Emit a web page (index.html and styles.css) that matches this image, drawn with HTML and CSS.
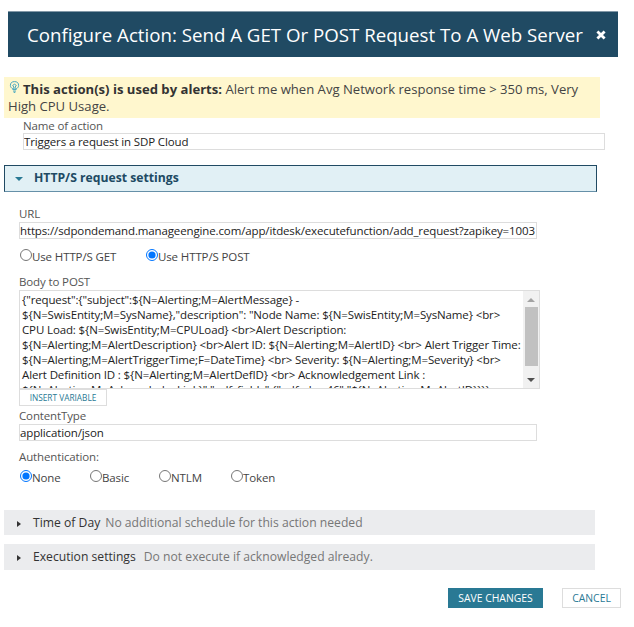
FILE: index.html
```
<!DOCTYPE html>
<html lang="en">

<head>
  <meta charset="UTF-8">
  <meta name="viewport" content="width=device-width, initial-scale=1.0">
  <title>Configure Action</title>
  <link rel="stylesheet" href="styles.css">
</head>

<body>
  <header class="dialog-title">
    <h1>Configure Action: Send A GET Or POST Request To A Web Server</h1>
    <svg class="close" viewBox="0 0 10 10"><path d="M1.4 1.4 8.6 8.6M8.6 1.4 1.4 8.6" /></svg>
  </header>

  <div class="hint">
    <svg class="bulb" viewBox="0 0 10 12">
      <path d="M3.3 8.6V7.8C1.8 7 .9 6 .9 4.5a4.1 3.9 0 0 1 8.2 0C9.1 6 8.2 7 6.7 7.8v.8z" />
      <path d="M4.3 8.4V6L3.2 4.4 5 3.2l1.8 1.2L5.7 6v2.4M3.6 10.1h2.8M4.2 11.4h1.6" />
    </svg>
    <p><strong>This action(s) is used by alerts:</strong> <span>Alert me when Avg Network response time &gt; 350 ms, Very</span><br><span class="hint-end">High CPU Usage.</span></p>
  </div>

  <div class="name">
    <label class="label" for="name">Name of action</label>
    <input class="field" id="name" type="text" value="Triggers a request in SDP Cloud">
  </div>

  <h2 class="section-title"><i class="arrow-down"></i><span>HTTP/S request settings</span></h2>

  <div class="settings">
    <label class="label" for="url">URL</label>
    <input class="field url" id="url" type="text" value="https://sdpondemand.manageengine.com/app/itdesk/executefunction/add_request?zapikey=1003">

    <div class="radios method">
      <label><input type="radio" name="method"><span>Use HTTP/S GET</span></label>
      <label><input type="radio" name="method" checked><span>Use HTTP/S POST</span></label>
    </div>

    <div class="label">Body to POST</div>
    <div class="body-post">
      <div class="lines">
        <p>{"request":{"subject":${N=Alerting;M=AlertMessage} -</p>
        <p>${N=SwisEntity;M=SysName},"description": "Node Name: ${N=SwisEntity;M=SysName} &lt;br&gt;</p>
        <p>CPU Load: ${N=SwisEntity;M=CPULoad} &lt;br&gt;Alert Description:</p>
        <p>${N=Alerting;M=AlertDescription} &lt;br&gt;Alert ID: ${N=Alerting;M=AlertID} &lt;br&gt; Alert Trigger Time:</p>
        <p>${N=Alerting;M=AlertTriggerTime;F=DateTime} &lt;br&gt; Severity: ${N=Alerting;M=Severity} &lt;br&gt;</p>
        <p>Alert Definition ID : ${N=Alerting;M=AlertDefID} &lt;br&gt; Acknowledgement Link :</p>
        <p>${N=Alerting;M=AcknowledgeLink}","udf_fields":{"udf_char46":"${N=Alerting;M=AlertID}}}}</p>
      </div>
      <div class="scrollbar">
        <i class="up"></i>
        <div class="thumb"></div>
        <i class="down"></i>
      </div>
    </div>
    <button class="insert">INSERT VARIABLE</button>

    <label class="label content-label" for="type">ContentType</label>
    <input class="field type" id="type" type="text" value="application/json">

    <div class="label auth-label">Authentication:</div>
    <div class="radios auth">
      <label><input type="radio" name="auth" checked><span>None</span></label>
      <label><input type="radio" name="auth"><span>Basic</span></label>
      <label><input type="radio" name="auth"><span>NTLM</span></label>
      <label><input type="radio" name="auth"><span>Token</span></label>
    </div>
  </div>

  <div class="bar time"><i class="arrow-right"></i><b>Time of Day</b><span>No additional schedule for this action needed</span></div>
  <div class="bar execution"><i class="arrow-right"></i><b>Execution settings</b><span>Do not execute if acknowledged already.</span></div>

  <footer class="buttons">
    <button class="save">SAVE CHANGES</button>
    <button class="cancel">CANCEL</button>
  </footer>
</body>

</html>
```
FILE: styles.css
```
* {
  box-sizing: border-box;
  margin: 0;
  padding: 0;
}

body {
  width: 634px;
  height: 627px;
  padding: 11px 0 0 4px;
  overflow: hidden;
  background: #fff;
  font-family: "Open Sans", "Liberation Sans", sans-serif;
  font-size: 11.5px;
  color: #444;
}

button,
input {
  font-family: inherit;
}

.dialog-title {
  display: flex;
  align-items: center;
  width: 610px;
  height: 46px;
  margin-left: 4px;
  padding-left: 19px;
  background: #204a63;
  border-top: 1px solid #8298a7;
  color: #fff;
}

h1 {
  width: 569px;
  font-size: 18.7px;
  font-weight: 400;
  white-space: nowrap;
}

.close {
  width: 10px;
  height: 10px;
  fill: none;
  stroke: #fff;
  stroke-width: 2.8;
}

.hint {
  display: flex;
  width: 596px;
  height: 41px;
  margin-top: 20px;
  padding-left: 4px;
  background: #fff7ce;
  font-size: 13.1px;
  line-height: 17px;
  white-space: nowrap;
}

.hint p {
  padding-top: 4px;
  color: #444;
}

.hint strong {
  color: #333;
}

.hint-end {
  margin-left: -15px;
}

.bulb {
  width: 11px;
  height: 12px;
  margin: 4px 3px 0 1px;
  fill: none;
  stroke: #45a6bf;
}

.label {
  display: block;
  height: 15px;
  line-height: 15px;
  font-size: 11.5px;
  letter-spacing: -0.13px;
  color: #555;
}

.field {
  display: block;
  height: 17px;
  border: 1px solid #ddd;
  font-size: 11.5px;
  letter-spacing: -0.13px;
  color: #222;
  outline: 0;
}

.name {
  margin-left: 19px;
}

.name .field {
  width: 582px;
}

.section-title {
  display: flex;
  align-items: center;
  width: 593px;
  height: 27px;
  margin-top: 15px;
  background: #e1f0f5;
  border: 1px solid #204a63;
  border-bottom-color: #6690a8;
  font-size: 12.2px;
  color: #204a63;
}

.section-title span {
  margin-top: -2px;
}

.arrow-down {
  margin: 0 11px 0 10px;
  border: 4px solid transparent;
  border-top: 4px solid #297994;
  border-bottom: 0;
}

.settings {
  height: 318px;
  padding: 15px 0 0 15px;
}

.settings .label {
  line-height: 13px;
}

.url,
.type {
  width: 518px;
}

.radios {
  display: flex;
  font-size: 11.5px;
  letter-spacing: -0.12px;
  color: #444;
}

.radios label {
  display: flex;
}

.radios input {
  width: 12px;
  height: 12px;
  margin: 0 0 0 1px;
}

.radios span {
  line-height: 16px;
}

.method {
  height: 36px;
  padding-top: 10px;
}

.method label {
  width: 126px;
}

.body-post {
  display: flex;
  width: 521px;
  height: 99px;
  border: 1px solid #ddd;
  color: #222;
}

.lines {
  flex: 1;
  height: 97px;
  padding: 2px 0 0 2px;
  overflow: hidden;
  font-size: 11.5px;
  letter-spacing: -0.13px;
  line-height: 14.95px;
  white-space: nowrap;
}

.scrollbar {
  display: flex;
  flex-direction: column;
  align-items: center;
  width: 16px;
  background: #f1f1f1;
}

.up {
  margin: 7px 0 5px;
  border: 4px solid transparent;
  border-bottom: 4px solid #a3a3a3;
  border-top: 0;
}

.thumb {
  width: 13px;
  height: 59px;
  background: #c1c1c1;
}

.down {
  margin-top: 12px;
  border: 4px solid transparent;
  border-top: 4px solid #505050;
  border-bottom: 0;
}

.insert {
  display: block;
  width: 88px;
  height: 17px;
  background: #fff;
  border: 1px solid #ddd;
  font-size: 8.3px;
  color: #297994;
}

.content-label {
  margin-top: 3px;
}

.auth-label {
  margin-top: 9px;
}

.auth {
  padding-top: 5px;
}

.auth label {
  width: 70px;
}

.auth label:nth-child(2) {
  width: 69px;
}

.auth label:nth-child(3) {
  width: 72px;
}

.bar {
  display: flex;
  align-items: center;
  width: 591px;
  height: 25px;
  background: #ebecee;
  font-size: 12.17px;
  color: #777;
}

.bar b,
.bar span {
  margin-top: -1px;
}

.bar b {
  font-weight: 400;
  color: #333;
}

.arrow-right {
  margin: 2px 12px 0 13px;
  border: 3.5px solid transparent;
  border-left: 4px solid #333;
  border-right: 0;
}

.time span {
  margin-left: 5px;
}

.execution {
  margin-top: 9px;
  height: 26px;
}

.execution span {
  margin-left: 8px;
}

.buttons {
  display: flex;
  margin: 18px 0 0 444px;
}

.buttons button {
  height: 20px;
  border: 1px solid #ddd;
  background: #fff;
  font-size: 10.4px;
  color: #297994;
}

.buttons .save {
  width: 95px;
  margin-right: 19px;
  background: #297994;
  border-color: #297994;
  color: #fff;
}

.cancel {
  width: 59px;
}
```
